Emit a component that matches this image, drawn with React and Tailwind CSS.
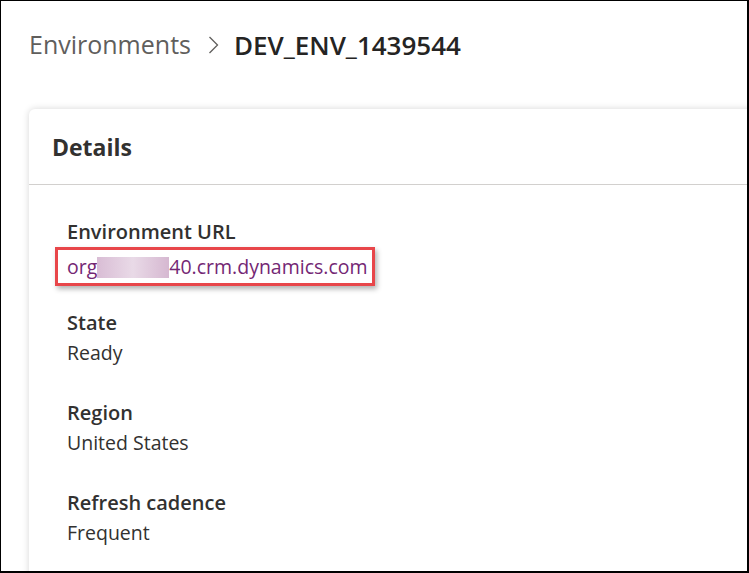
import React from 'react'

const FONT = { fontFamily: '"Open Sans", "Noto Sans", Arial, sans-serif' }

function Field({ label, children, className = '' }) {
  return (
    <div className={className}>
      <div className="h-[30px] leading-[30px] text-[20px] font-semibold text-[#323130]">{label}</div>
      <div className="h-[30px] leading-[30px] text-[19.5px] text-[#323130]">{children}</div>
    </div>
  )
}

export default function App() {
  return (
    <div
      style={FONT}
      className="w-[749px] h-[573px] overflow-hidden bg-white border-l border-t border-r-2 border-b-2 border-black box-border"
    >
      {/* Breadcrumb */}
      <div className="flex items-center h-[88px] pl-[28px]">
        <span className="text-[25px] text-[#605e5c]">Environments</span>
        <svg className="ml-[17px] mr-[15px]" width="11" height="18" viewBox="0 0 11 18" fill="none">
          <path d="M1.5 1 L9.5 9 L1.5 17" stroke="#605e5c" strokeWidth="1.3" />
        </svg>
        <span className="text-[26px] text-[#252423] font-semibold">DEV_ENV_1439544</span>
      </div>

      {/* Details card */}
      <div className="ml-[28px] mt-[20px] -mr-[20px] bg-white rounded-tl-[6px] shadow-[0_0_7px_rgba(0,0,0,0.16)] h-[500px]">
        <div className="h-[76px] flex items-center pl-[23px] pt-[1px] border-b border-[#d2d0ce]">
          <span className="text-[23px] font-bold text-[#323130]">Details</span>
        </div>

        <div className="pl-[38px] pt-[32px]">
          <div>
            <div className="h-[30px] leading-[30px] text-[20px] font-semibold text-[#323130]">Environment URL</div>
            <div className="-ml-[12px] inline-flex items-center h-[39px] w-[320px] border-[3px] border-[#e8464a] pl-[9px] text-[19.5px] text-[#742774] shadow-[2px_3px_5px_rgba(0,0,0,0.3)]">
              <span>org</span>
              <span className="inline-block w-[72px] h-[21px] mt-[1px] blur-[0.6px] bg-linear-to-r from-[#d9bdd5] via-[#e9dae7] to-[#d6b8d1]" />
              <span>40.crm.dynamics.com</span>
            </div>
          </div>

          <Field label="State" className="mt-[22px]">Ready</Field>
          <Field label="Region" className="mt-[30px]">United States</Field>
          <Field label="Refresh cadence" className="mt-[30px]">Frequent</Field>
        </div>
      </div>
    </div>
  )
}
